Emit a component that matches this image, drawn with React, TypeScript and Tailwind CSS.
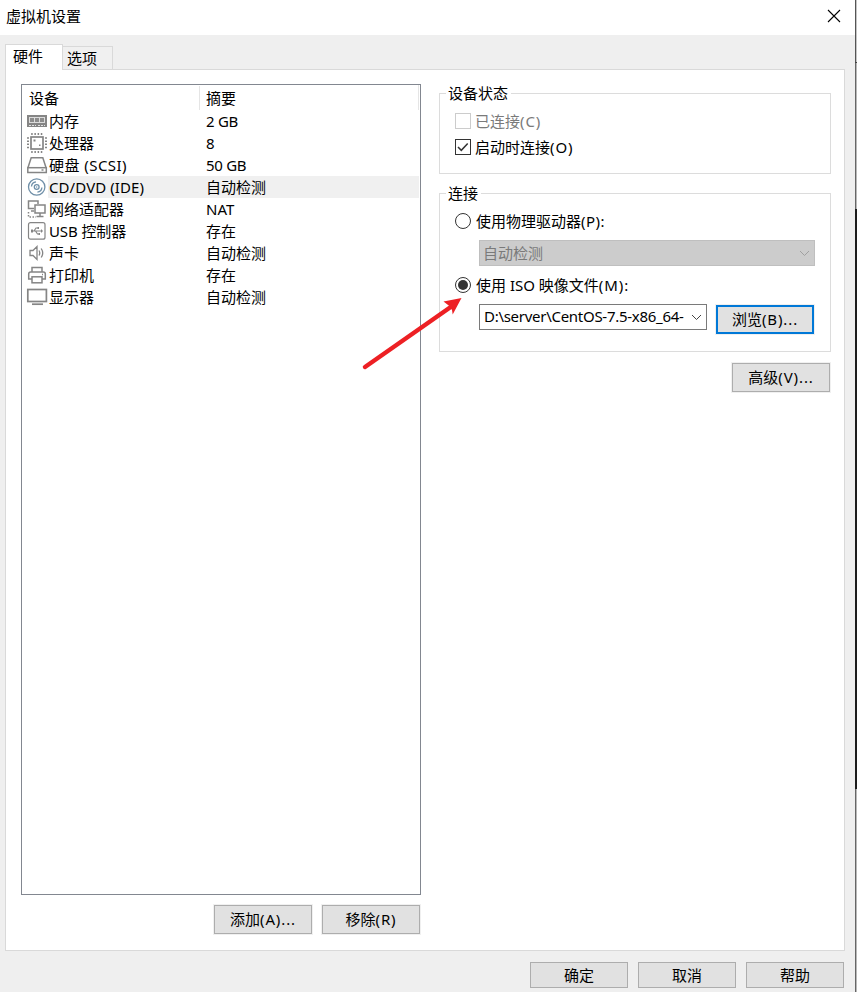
import type { ReactNode } from 'react';

const icons: Record<string, ReactNode> = {
    memory: (
        <g shapeRendering="crispEdges">
            <rect x="1" y="5" width="20" height="12" fill="#858585" />
            <rect x="3" y="7" width="16" height="6" fill="#dcdcdc" />
            <path d="M4 8h4v4H4zM9 8h4v4H9zM14 8h4v4h-4z" fill="#8c8c8c" />
            <path d="M3 15.500h16" stroke="#e4e4e4" strokeDasharray="2 1" />
            <path d="M10 15.500h2" stroke="#858585" />
        </g>
    ),
    cpu: (
        <g stroke="#858585" fill="none">
            <rect x="5" y="5" width="12" height="12" strokeWidth="1.700" />
            <path d="M5.200 2h12M5.200 20h12" strokeWidth="2" strokeDasharray="1.500 1.700" />
            <path d="M2 5.200v12M20 5.200v12" strokeWidth="2" strokeDasharray="1.500 1.700" />
            <path d="M7.500 7.500h2v2h-2zM13 12.500h1.500V14H13z" fill="#858585" stroke="none" />
        </g>
    ),
    disk: (
        <g stroke="#858585" fill="none" strokeWidth="1.5">
            <path d="M2 13.500 5.200 3.800h11.600l3.200 9.700" />
            <rect x="1.800" y="13.700" width="18.500" height="4.800" />
            <path d="M15.500 16h2" />
        </g>
    ),
    disc: (
        <g stroke="#6f8fa8" fill="none" strokeWidth="1.3">
            <circle cx="10.700" cy="11" r="8.200" />
            <circle cx="10.700" cy="11" r="2.400" />
            <circle cx="10.700" cy="11" r=".7" fill="#6f8fa8" stroke="none" />
            <path d="M5.500 10.500a5 5 0 0 1 4.500-4.600M15.900 11.500a5 5 0 0 1-4.500 4.600" />
        </g>
    ),
    network: (
        <g stroke="#858585" fill="none" strokeWidth="1.5">
            <path d="M8 10.500H2.500V3h9.500v3M5 13h3" />
            <rect x="9" y="7" width="10" height="8" fill="#fff" />
            <path d="M14 15v3M10.500 18.500h7" />
            <path d="M2.500 14v5H10" strokeDasharray="1.500 1.500" />
        </g>
    ),
    usb: (
        <g stroke="#858585" fill="none" strokeWidth="1.2">
            <rect x="2.500" y="2.700" width="16.500" height="16.500" rx="2" />
            <path d="M6 11h9.500M8 11l2-3h2M9.500 11l2 3h2" />
            <path d="M15 9v4l2-2zM5 9.500h2v3H5zM11.500 7H13v2h-1.500zM12.500 13H14v2h-1.500z" fill="#858585" stroke="none" />
        </g>
    ),
    sound: (
        <g stroke="#858585" fill="none" strokeWidth="1.3">
            <path d="M4 8.500h3l4-4v13l-4-4H4z" />
            <path d="M13 8.500q1.500 2.500 0 5M15.200 6.500q3 4.500 0 9" />
        </g>
    ),
    printer: (
        <g stroke="#858585" fill="none" strokeWidth="1.5">
            <path d="M6 8V3.500h10V8M6 15H2.700V10q0-2 2-2h12.600q2 0 2 2v5H16" />
            <rect x="6" y="12.800" width="10" height="6" />
            <path d="M16 10.500h1" />
        </g>
    ),
    display: (
        <g stroke="#858585" fill="none" strokeWidth="1.700">
            <rect x="1.800" y="3.500" width="18.600" height="12" />
            <path d="M6 18.200h11" />
        </g>
    ),
};

const devices = [
    { icon: 'memory', name: '内存', summary: '2 GB' },
    { icon: 'cpu', name: '处理器', summary: '8' },
    { icon: 'disk', name: '硬盘 (SCSI)', summary: '50 GB', tracking: 'tracking-[0.45px]' },
    { icon: 'disc', name: 'CD/DVD (IDE)', summary: '自动检测', tracking: 'tracking-[0.08px]', selected: true },
    { icon: 'network', name: '网络适配器', summary: 'NAT' },
    { icon: 'usb', name: 'USB 控制器', summary: '存在', tracking: 'tracking-[-0.1px]' },
    { icon: 'sound', name: '声卡', summary: '自动检测' },
    { icon: 'printer', name: '打印机', summary: '存在' },
    { icon: 'display', name: '显示器', summary: '自动检测' },
];

const Button = ({ children, className = '' }: { children: ReactNode; className?: string }) => (
    <button className={`w-[98px] shrink-0 border border-[#adadad] bg-[#e1e1e1] text-center whitespace-nowrap ${className}`}>{children}</button>
);

const Key = ({ children }: { children: ReactNode }) => <span className="tracking-[0.9px]">{children}</span>;

const Chevron = ({ color }: { color: string }) => (
    <svg width="11" height="7" viewBox="0 0 11 7" fill="none" stroke={color} className="shrink-0">
        <path d="M1 1 5.500 5.500 10 1" />
    </svg>
);

const Group = ({ title, className, children }: { title: string; className: string; children: ReactNode }) => (
    <section className={`flex flex-col border border-[#dcdcdc] ${className}`}>
        <h2 className="-mt-[12px] mb-px ml-[6px] h-[22px] self-start bg-white pr-[3px] pl-[2px] leading-[22px]">{title}</h2>
        {children}
    </section>
);

const DeviceList = () => (
    <div className="h-[811px] w-[400px] border border-[#828790] bg-white">
        <div className="flex h-[25px] pr-px leading-[26px]">
            <div className="mt-px w-[178px] border-r border-[#e5e5e5] pl-[7px]">
                <div className="-mt-px">设备</div>
            </div>
            <div className="grow border-r border-[#e5e5e5] pl-[6px]">摘要</div>
        </div>
        {devices.map((device) => (
            <div key={device.name} className="flex h-[22px] pr-px pl-[4px] leading-[22px]">
                <svg width="22" height="22" viewBox="0 0 22 22" className="shrink-0">
                    {icons[device.icon]}
                </svg>
                <div className={`flex grow ${device.selected ? 'bg-[#f0f0f0]' : ''}`}>
                    <span className={`w-[158px] pl-px whitespace-pre ${device.tracking ?? ''}`}>{device.name}</span>
                    <span className={device.summary.endsWith('GB') ? 'tracking-[-0.3px]' : ''}>{device.summary}</span>
                </div>
            </div>
        ))}
    </div>
);

const Settings = () => (
    <div className="flex w-[392px] flex-col">
        <Group title="设备状态" className="mt-[9px] h-[81px]">
            <label className="mt-[3px] ml-[15px] flex h-[26px] items-center text-[#7a7a7a]">
                <span className="mr-[4px] size-[16px] border border-[#cccccc]" />
                <span>
                    已连接<Key>(C)</Key>
                </span>
            </label>
            <label className="ml-[15px] flex h-[26px] items-center">
                <span className="mr-[4px] size-[16px] border border-[#333]">
                    <svg width="14" height="14" viewBox="0 0 14 14" fill="none" stroke="#333" strokeWidth="1.500">
                        <path d="m2 7 3.300 3.300 6.400-6.800" />
                    </svg>
                </span>
                <span>
                    启动时连接<Key>(O)</Key>
                </span>
            </label>
        </Group>
        <Group title="连接" className="mt-[19px] h-[159px]">
            <label className="mt-[5px] ml-[15px] flex h-[22px] items-center">
                <span className="mr-[5px] size-[16px] rounded-full border border-[#333]" />
                <span>
                    使用物理驱动器<span className="tracking-[0.5px]">(P):</span>
                </span>
            </label>
            <div className="mt-[8px] ml-[39px] flex h-[26px] w-[336px] items-center justify-between border border-[#bfbfbf] bg-[#cccccc] pr-[4px] pl-[3px] text-[#7a7a7a]">
                自动检测
                <Chevron color="#a0a0a0" />
            </div>
            <label className="mt-[8px] ml-[15px] flex h-[22px] items-center">
                <span className="mr-[5px] flex size-[16px] items-center justify-center rounded-full border border-[#333]">
                    <span className="size-[10px] rounded-full bg-[#333]" />
                </span>
                <span>
                    使用 ISO 映像文件<span className="tracking-[0.9px]">(M):</span>
                </span>
            </label>
            <div className="mt-[8px] ml-[39px] flex items-start">
                <div className="flex h-[26px] w-[228px] items-center justify-between border border-[#7a7a7a] bg-white pr-[4px] pl-[4px]">
                    <span className="-mt-[2px] tracking-[-0.28px] whitespace-nowrap">D:\server\CentOS-7.5-x86_64-</span>
                    <Chevron color="#444" />
                </div>
                <button className="mt-px ml-[9px] h-[29px] w-[98px] border-2 border-[#0078d7] bg-[#e1e1e1] pb-[2px] whitespace-nowrap outline outline-[#f0f0f0]">
                    浏览<Key>(B)...</Key>
                </button>
            </div>
        </Group>
        <Button className="mt-[11px] mr-px h-[29px] self-end pb-[2px] outline outline-[#f0f0f0]">
            高级<Key>(V)...</Key>
        </Button>
    </div>
);

export default function App() {
    return (
        <div className="relative flex h-[992px] w-[857px] overflow-hidden bg-[#efefef] font-['Noto_Sans','Noto_Sans_CJK_SC',sans-serif] text-[15px] leading-[22px] text-black">
            <div className="flex w-[855px] flex-col">
                <header className="flex h-[35px] items-center justify-between bg-white pr-[14px] pl-[6px]">
                    <h1 className="-mt-[4px]">虚拟机设置</h1>
                    <svg width="14" height="14" viewBox="0 0 14 14" stroke="#000" strokeWidth="1.100" className="-mt-[3px]">
                        <path d="m1 1 12 12M13 1 1 13" />
                    </svg>
                </header>
                <nav className="z-10 mt-[9px] -mb-px ml-[5px] flex h-[26px] items-end">
                    <div className="h-[26px] w-[58px] border border-b-0 border-[#d9d9d9] bg-white pl-[7px] leading-[23px]">硬件</div>
                    <div className="h-[24px] w-[50px] border border-l-0 border-[#d9d9d9] bg-[#f0f0f0] pl-[4px] leading-[23px]">选项</div>
                </nav>
                <main className="ml-[5px] flex h-[882px] w-[840px] items-start border border-[#d9d9d9] bg-white pt-[14px] pl-[15px]">
                    <div className="mr-[18px] flex flex-col">
                        <DeviceList />
                        <div className="mt-[10px] mr-px flex justify-end gap-[10px]">
                            <Button className="h-[29px] pb-[2px] outline outline-[#f0f0f0]">
                                添加<Key>(A)...</Key>
                            </Button>
                            <Button className="h-[29px] pb-[2px] outline outline-[#f0f0f0]">
                                移除<Key>(R)</Key>
                            </Button>
                        </div>
                    </div>
                    <Settings />
                </main>
                <footer className="mt-[11px] flex justify-end gap-[10px] pr-[11px]">
                    <Button className="h-[26px]">确定</Button>
                    <Button className="h-[26px]">取消</Button>
                    <Button className="h-[26px]">帮助</Button>
                </footer>
            </div>
            {/* sliver of the desktop behind the dialog */}
            <div className="flex w-[2px] flex-col">
                <div className="h-[62px] border-l border-[#555] bg-[#c4c4c4]" />
                <div className="h-px bg-[#444]" />
                <div className="h-[146px] border-l border-[#666] bg-[#b8b8b8]" />
                <div className="h-[580px] bg-[#1c1c1c]" />
                <div className="grow border-l border-[#666] bg-[#b8b8b8]" />
            </div>
            <svg width="120" height="90" viewBox="0 0 120 90" className="absolute top-[285px] left-[355px] z-20">
                <path d="M10 82 95 22.500" stroke="#ed2024" strokeWidth="4.500" strokeLinecap="round" />
                <path d="M106.500 13 88.500 16.500 94 20.700 97 25 97.700 29.500z" fill="#ed2024" />
            </svg>
        </div>
    );
}
